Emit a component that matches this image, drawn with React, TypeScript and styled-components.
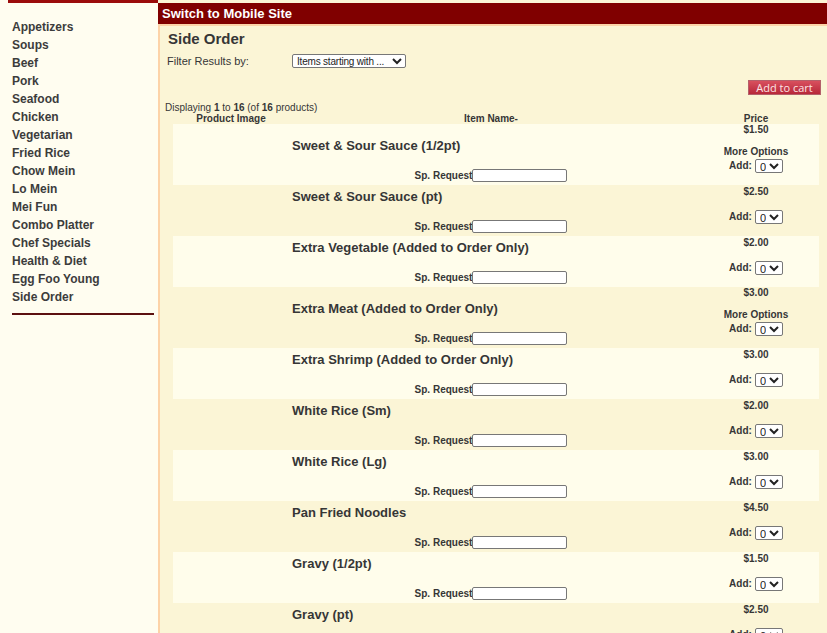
import React from "react";
import styled, { createGlobalStyle } from "styled-components";

const GlobalStyle = createGlobalStyle`
  html, body {
    margin: 0;
    padding: 0;
    background: #fbf5d6;
    font-family: "Liberation Sans", Arial, sans-serif;
    color: #363636;
  }
`;

const Page = styled.div`
  display: flex;
  width: 827px;
  min-height: 633px;
`;

const Sidebar = styled.div`
  width: 158px;
  flex-shrink: 0;
  background: #fffdf0;
`;

const LogoStrip = styled.div`
  margin-left: 8px;
  height: 3px;
  background: #9b0b0b;
`;

const CategoryList = styled.ul`
  list-style: none;
  margin: 15px 0 0;
  padding: 0 0 0 12px;
`;

const CategoryItem = styled.li`
  font-size: 12px;
  font-weight: bold;
  line-height: 18px;
  color: #3c3c3c;
`;

const SideRule = styled.div`
  margin: 7px 4px 0 12px;
  height: 2px;
  background: #5c1010;
`;

const Main = styled.div`
  flex: 1;
  display: flex;
  flex-direction: column;
  padding-top: 3px;
`;

const MobileBar = styled.div`
  height: 21px;
  background: #800000;
  color: #ffffff;
  font-size: 13px;
  font-weight: bold;
  line-height: 21px;
  padding-left: 4px;
  border-bottom: 2px solid #fdd3a8;
`;

const Content = styled.div`
  flex: 1;
  border-left: 2px solid #fdd3a8;
  padding: 0 6px 0 5px;
`;

const Title = styled.h1`
  margin: 4px 0 0 3px;
  font-size: 15px;
  line-height: 18px;
  font-weight: bold;
  color: #363636;
`;

const FilterRow = styled.div`
  display: flex;
  align-items: center;
  height: 14px;
  margin-top: 6px;
`;

const FilterLabel = styled.span`
  width: 125px;
  padding-left: 2px;
  font-size: 11px;
`;

const FilterSelect = styled.select`
  width: 114px;
  height: 14px;
  font-size: 10px;
  letter-spacing: -0.2px;
  font-family: "Liberation Sans", Arial, sans-serif;
  padding: 0;
  border: 1px solid #777;
  border-radius: 2px;
  background: #fff;
  color: #222;
`;

const CartRow = styled.div`
  display: flex;
  justify-content: flex-end;
  margin-top: 12px;
`;

const CartButton = styled.button`
  width: 73px;
  height: 15px;
  padding: 0;
  border: 1px solid #b4606a;
  background: linear-gradient(#d8505e, #b8283a);
  color: #fde4e4;
  font-family: "Open Sans", "Liberation Sans", sans-serif;
  font-size: 11px;
  line-height: 13px;
`;

const Displaying = styled.div`
  margin-top: 7px;
  font-size: 10px;
  line-height: 11px;
`;

const Table = styled.div`
  margin: 0 2px 0 8px;
`;

const HeadRow = styled.div`
  display: grid;
  grid-template-columns: 116px 404px 126px;
  font-size: 10px;
  font-weight: bold;
  line-height: 11px;
  text-align: center;
`;

const Row = styled.div<{ $shaded: boolean }>`
  display: grid;
  grid-template-columns: 116px 404px 126px;
  background: ${(p) => (p.$shaded ? "#fffdeb" : "transparent")};
`;

const NameCell = styled.div`
  display: flex;
  flex-direction: column;
  justify-content: flex-end;
  padding: 0 0 3px 3px;
`;

const ItemName = styled.div`
  font-size: 13px;
  font-weight: bold;
  line-height: 15px;
  color: #363636;
  margin: 4px 0 15px;
`;

const RequestLine = styled.div`
  display: flex;
  justify-content: center;
  align-items: center;
  height: 14px;
  font-size: 10px;
  font-weight: bold;
  padding-right: 3px;
`;

const RequestInput = styled.input`
  width: 95px;
  height: 13px;
  box-sizing: border-box;
  border: 1px solid #777;
  border-radius: 2px;
  background: #fff;
  padding: 0;
`;

const PriceCell = styled.div<{ $options: boolean }>`
  display: flex;
  flex-direction: column;
  align-items: center;
  font-size: 10px;
  font-weight: bold;
  line-height: 11px;
  padding-top: ${(p) => (p.$options ? "0" : "1px")};
  padding-bottom: 12px;
`;

const Spacer = styled.div`
  height: 11px;
`;

const AddLine = styled.div`
  display: flex;
  align-items: center;
  gap: 3px;
  height: 15px;
  margin-top: 1px;
`;

const QtySelect = styled.select`
  width: 28px;
  height: 14px;
  font-size: 11px;
  font-family: "Liberation Sans", Arial, sans-serif;
  padding: 0;
  border: 1px solid #777;
  border-radius: 2px;
  background: #fff;
  color: #222;
`;

const categories = [
  "Appetizers",
  "Soups",
  "Beef",
  "Pork",
  "Seafood",
  "Chicken",
  "Vegetarian",
  "Fried Rice",
  "Chow Mein",
  "Lo Mein",
  "Mei Fun",
  "Combo Platter",
  "Chef Specials",
  "Health & Diet",
  "Egg Foo Young",
  "Side Order",
];

const products = [
  { name: "Sweet & Sour Sauce (1/2pt)", price: "$1.50", options: true },
  { name: "Sweet & Sour Sauce (pt)", price: "$2.50", options: false },
  { name: "Extra Vegetable (Added to Order Only)", price: "$2.00", options: false },
  { name: "Extra Meat (Added to Order Only)", price: "$3.00", options: true },
  { name: "Extra Shrimp (Added to Order Only)", price: "$3.00", options: false },
  { name: "White Rice (Sm)", price: "$2.00", options: false },
  { name: "White Rice (Lg)", price: "$3.00", options: false },
  { name: "Pan Fried Noodles", price: "$4.50", options: false },
  { name: "Gravy (1/2pt)", price: "$1.50", options: false },
  { name: "Gravy (pt)", price: "$2.50", options: false },
];

const App = () => {
  return (
    <>
      <GlobalStyle />
      <Page>
        <Sidebar>
          <LogoStrip />
          <CategoryList>
            {categories.map((c) => (
              <CategoryItem key={c}>{c}</CategoryItem>
            ))}
          </CategoryList>
          <SideRule />
        </Sidebar>
        <Main>
          <MobileBar>Switch to Mobile Site</MobileBar>
          <Content>
            <Title>Side Order</Title>
            <FilterRow>
              <FilterLabel>Filter Results by:</FilterLabel>
              <FilterSelect defaultValue="">
                <option value="">Items starting with ...</option>
              </FilterSelect>
            </FilterRow>
            <CartRow>
              <CartButton>Add to cart</CartButton>
            </CartRow>
            <Displaying>
              Displaying <b>1</b> to <b>16</b> (of <b>16</b> products)
            </Displaying>
            <Table>
              <HeadRow>
                <div>Product Image</div>
                <div>Item Name-</div>
                <div>Price</div>
              </HeadRow>
              {products.map((p, i) => (
                <Row key={p.name} $shaded={i % 2 === 0}>
                  <div />
                  <NameCell>
                    <ItemName>{p.name}</ItemName>
                    <RequestLine>
                      Sp. Request
                      <RequestInput type="text" />
                    </RequestLine>
                  </NameCell>
                  <PriceCell $options={p.options}>
                    <div>{p.price}</div>
                    <Spacer />
                    {p.options && <div>More Options</div>}
                    <AddLine>
                      Add:
                      <QtySelect defaultValue="0">
                        <option value="0">0</option>
                      </QtySelect>
                    </AddLine>
                  </PriceCell>
                </Row>
              ))}
            </Table>
          </Content>
        </Main>
      </Page>
    </>
  );
};

export default App;
